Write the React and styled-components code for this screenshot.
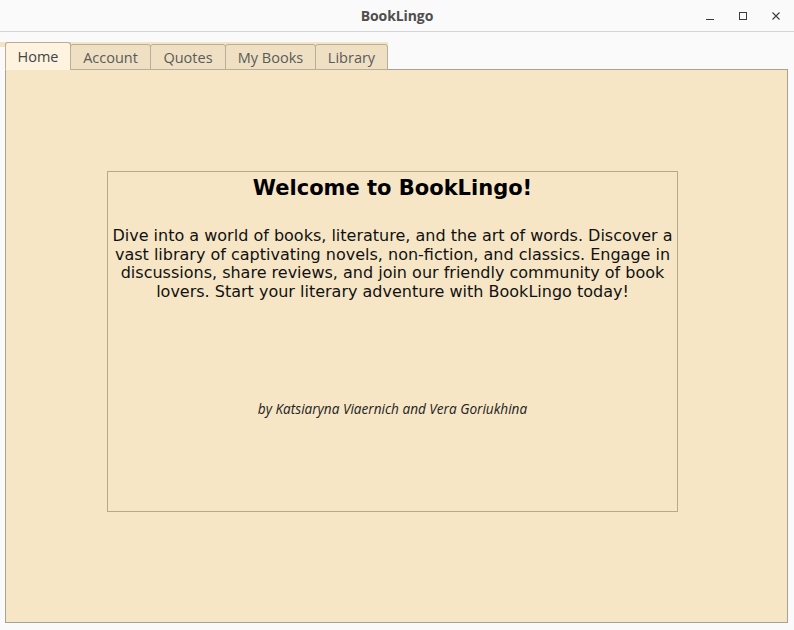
import React from "react";
import styled, { createGlobalStyle } from "styled-components";

const Global = createGlobalStyle`
  html, body { margin: 0; padding: 0; background: #fafafa; }
  #root { width: 794px; height: 630px; overflow: hidden; }
`;

const Window = styled.div`
  width: 794px;
  height: 630px;
  display: flex;
  flex-direction: column;
  background: #fafafa;
`;

const TitleBar = styled.div`
  height: 32px;
  box-sizing: border-box;
  border-bottom: 1px solid #d4d4d4;
  background: #fafafa;
  display: grid;
  grid-template-columns: 1fr auto 1fr;
  align-items: center;
`;

const Title = styled.div`
  grid-column: 2;
  font-family: "Open Sans", "Noto Sans", sans-serif;
  font-weight: 700;
  font-size: 14px;
  color: #4e4e4e;
  letter-spacing: -0.1px;
`;

const Controls = styled.div`
  grid-column: 3;
  justify-self: end;
  display: flex;
  align-items: center;
  gap: 17px;
  padding-right: 10px;
`;

const CtrlBtn = styled.div`
  width: 16px;
  height: 16px;
  display: flex;
  align-items: center;
  justify-content: center;
  color: #3c3c3c;
`;

const Body = styled.div`
  flex: 1;
  display: flex;
  flex-direction: column;
  padding-top: 10px;
`;

const TabBar = styled.div`
  display: flex;
  align-items: flex-end;
  align-self: flex-start;
  padding-left: 5px;
  margin-bottom: -1px;
  position: relative;
  z-index: 1;
  background: linear-gradient(#f3e4c6 0 5px, transparent 5px);
`;

const Tab = styled.div`
  box-sizing: border-box;
  height: ${(p) => (p.$active ? "28px" : "26px")};
  padding: 0 11px;
  display: flex;
  align-items: center;
  justify-content: center;
  font-family: "Open Sans", "Noto Sans", sans-serif;
  font-size: 14.5px;
  color: ${(p) => (p.$active ? "#444" : "#5a5a5a")};
  background: ${(p) => (p.$active ? "#fdf3df" : "#efe0c4")};
  border: 1px solid #b9ad96;
  border-bottom: ${(p) => (p.$active ? "1px solid #fdf3df" : "1px solid #b9ad96")};
  border-radius: 3px 3px 0 0;
  margin-left: ${(p) => (p.$first ? "0" : "-1px")};
  width: ${(p) => p.$w}px;
`;

const Panel = styled.div`
  margin: 0 6px 0 5px;
  height: 554px;
  box-sizing: border-box;
  background: #f6e6c6;
  border: 1px solid #a9a292;
  padding: 101px 0 0 101px;
`;

const Card = styled.div`
  width: 571px;
  height: 341px;
  box-sizing: border-box;
  border: 1px solid #b7a78b;
  display: flex;
  flex-direction: column;
  align-items: center;
  text-align: center;
  padding: 0 4px;
`;

const Heading = styled.h1`
  margin: 4px 0 0;
  font-family: "DejaVu Sans", sans-serif;
  font-weight: 700;
  font-size: 21px;
  line-height: 24px;
  color: #000;
`;

const Intro = styled.p`
  margin: 27px 0 0;
  font-family: "DejaVu Sans", sans-serif;
  font-size: 16px;
  line-height: 18.7px;
  color: #111;
`;

const Authors = styled.div`
  margin-top: 97px;
  font-family: "Open Sans", "Noto Sans", sans-serif;
  font-style: italic;
  font-size: 13.6px;
  color: #222;
`;

const tabs = [
  { label: "Home", w: 66 },
  { label: "Account", w: 81 },
  { label: "Quotes", w: 76 },
  { label: "My Books", w: 91 },
  { label: "Library", w: 73 },
];

export default function App() {
  return (
    <>
      <Global />
      <Window>
        <TitleBar>
          <Title>BookLingo</Title>
          <Controls>
            <CtrlBtn>
              <svg width="10" height="10" viewBox="0 0 10 10">
                <line x1="1" y1="8.5" x2="9" y2="8.5" stroke="currentColor" strokeWidth="1" />
              </svg>
            </CtrlBtn>
            <CtrlBtn>
              <svg width="10" height="10" viewBox="0 0 10 10">
                <rect x="1.5" y="1.5" width="7" height="7" fill="none" stroke="currentColor" strokeWidth="1" />
              </svg>
            </CtrlBtn>
            <CtrlBtn>
              <svg width="10" height="10" viewBox="0 0 10 10">
                <path d="M1.5 1.5 L8.5 8.5 M8.5 1.5 L1.5 8.5" stroke="currentColor" strokeWidth="1.1" />
              </svg>
            </CtrlBtn>
          </Controls>
        </TitleBar>
        <Body>
          <TabBar>
            {tabs.map((t, i) => (
              <Tab key={t.label} $active={i === 0} $first={i === 0} $w={t.w}>
                {t.label}
              </Tab>
            ))}
          </TabBar>
          <Panel>
            <Card>
              <Heading>Welcome to BookLingo!</Heading>
              <Intro>
                Dive into a world of books, literature, and the art of words. Discover a vast
                library of captivating novels, non-fiction, and classics. Engage in discussions,
                share reviews, and join our friendly community of book lovers. Start your literary
                adventure with BookLingo today!
              </Intro>
              <Authors>by Katsiaryna Viaernich and Vera Goriukhina</Authors>
            </Card>
          </Panel>
        </Body>
      </Window>
    </>
  );
}
